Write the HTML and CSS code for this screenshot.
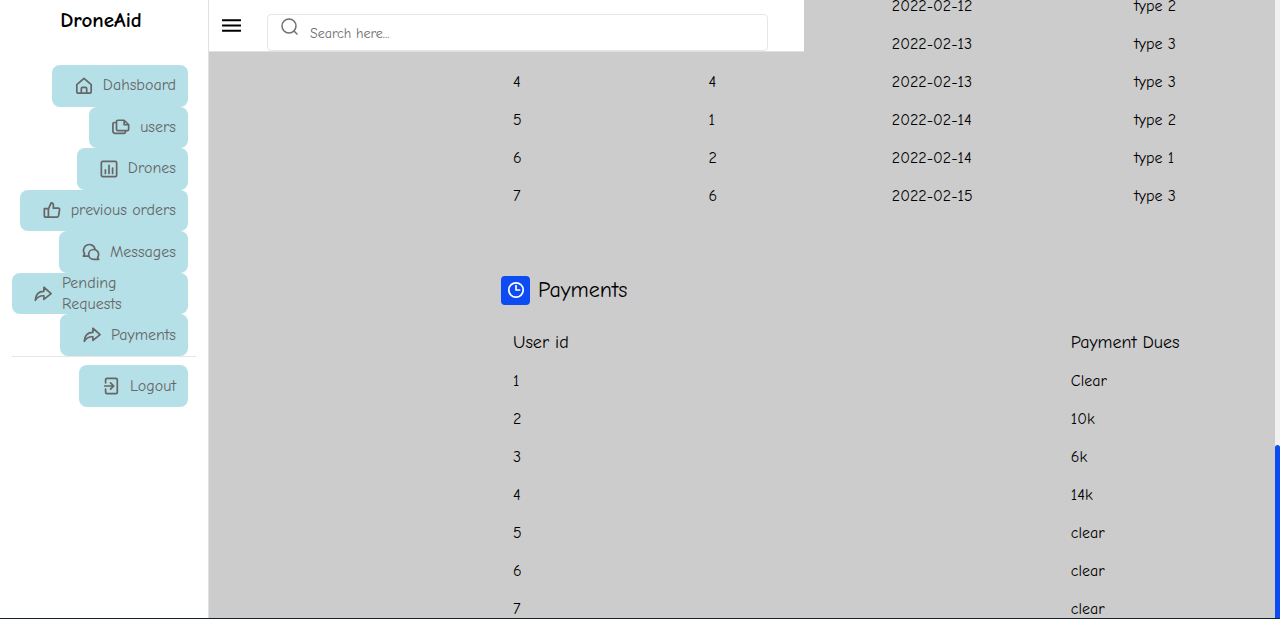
FILE: index.html
```html
<!DOCTYPE html>
<html lang="en">
<head>
<meta charset="utf-8">
<title>DroneAid</title>
<link rel="stylesheet" href="styles.css">
</head>
<body>
<div class="app">
  <aside class="sidebar">
    <h1 class="brand">DroneAid</h1>
    <nav class="menu">
      <a class="item" href="#"><svg class="icon" viewBox="0 0 20 20"><path d="M2 8.500 10 1.500l8 7V16.500q0 1.500-1.500 1.500h-13Q2 18 2 16.500zM7 18v-5q0-1.500 1.500-1.500h3q1.500 0 1.500 1.500V18"/></svg><span>Dahsboard</span></a>
      <a class="item" href="#"><svg class="icon" viewBox="0 0 20 20"><path d="M6.500 2.500H13.500l5 5v5q0 1.500-1.500 1.500h-10.500Q5 14 5 12.500V4q0-1.500 1.500-1.500zM13.500 2.500v5h5M5 5H3Q1 5 1 7v7.500q0 2.500 2.500 2.500h9.500q2 0 2-2v-1"/></svg><span>users</span></a>
      <a class="item" href="#"><svg class="icon" viewBox="0 0 20 20"><rect x="1.500" y="1.500" width="17" height="17" rx="1.500"/><path d="M6 11v4M10 6v9M14 9v6"/></svg><span>Drones</span></a>
      <a class="item" href="#"><svg class="icon" viewBox="0 0 20 20"><path d="M1.500 8.500h4.500v9.500H3q-1.500 0-1.500-1.500zM6 9l3-7q2.500 0 2.500 2.500v3.500H17q1.700 0 1.400 1.500L17.300 16.500Q17 18 15.500 18H6"/></svg><span>previous orders</span></a>
      <a class="item" href="#"><svg class="icon" viewBox="0 0 20 20"><path d="M7 14.500H1.500l1.400-2.500A6.500 6.500 0 1 1 14.500 6.700"/><path d="M12.900 7.200a5.500 5.500 0 1 0 0 11H18.500l-1.200-2.200A5.500 5.500 0 0 0 12.900 7.200z"/></svg><span>Messages</span></a>
      <a class="item item-wrap" href="#"><svg class="icon" viewBox="0 0 20 20"><path d="M11 2.500l8 7-8 6.500v-4q-6-.5-9.500 5Q2 7 11 7z"/></svg><span class="label-wrap">Pending Requests</span></a>
      <a class="item" href="#"><svg class="icon" viewBox="0 0 20 20"><path d="M11 2.500l8 7-8 6.500v-4q-6-.5-9.500 5Q2 7 11 7z"/></svg><span>Payments</span></a>
    </nav>
    <div class="menu-end">
      <a class="item" href="#"><svg class="icon" viewBox="0 0 20 20"><path d="M4 6.500v-3Q4 1.500 5.500 1.500h10Q17 1.500 17 3v14q0 1.500-1.500 1.500h-10Q4 18.500 4 17v-3.500M3 10H13M9.500 6.500 13 10l-3.500 3.500"/></svg><span>Logout</span></a>
    </div>
  </aside>

  <main class="main">
    <header class="topbar">
      <button class="toggle" type="button" aria-label="Toggle menu"><svg viewBox="0 0 20 14"><path d="M1 2h18M1 7h18M1 12h18"/></svg></button>
      <div class="search">
        <svg class="icon" viewBox="0 0 20 20"><circle cx="9" cy="9" r="7"/><path d="m14 14 3 3"/></svg>
        <input class="search-input" type="text" placeholder="Search here..." aria-label="Search">
      </div>
    </header>

    <div class="content">
      <table class="table orders">
        <colgroup><col class="col-id"><col class="col-user"><col class="col-date"><col></colgroup>
        <tbody>
          <tr><td></td><td></td><td>2022-02-12</td><td>type 2</td></tr>
          <tr><td></td><td></td><td>2022-02-13</td><td>type 3</td></tr>
          <tr><td>4</td><td>4</td><td>2022-02-13</td><td>type 3</td></tr>
          <tr><td>5</td><td>1</td><td>2022-02-14</td><td>type 2</td></tr>
          <tr><td>6</td><td>2</td><td>2022-02-14</td><td>type 1</td></tr>
          <tr><td>7</td><td>6</td><td>2022-02-15</td><td>type 3</td></tr>
        </tbody>
      </table>

      <h2 class="heading"><span class="badge"><svg class="icon" viewBox="0 0 20 20"><circle cx="10" cy="10" r="8"/><path d="M10 5v5h4"/></svg></span>Payments</h2>

      <table class="table">
        <colgroup><col class="col-payer"><col></colgroup>
        <thead><tr><th>User id</th><th>Payment Dues</th></tr></thead>
        <tbody>
          <tr><td>1</td><td>Clear</td></tr>
          <tr><td>2</td><td>10k</td></tr>
          <tr><td>3</td><td>6k</td></tr>
          <tr><td>4</td><td>14k</td></tr>
          <tr><td>5</td><td>clear</td></tr>
          <tr><td>6</td><td>clear</td></tr>
          <tr><td>7</td><td>clear</td></tr>
        </tbody>
      </table>
    </div>
  </main>
  <div class="scrollbar"><div class="thumb"></div></div>
</div>
</body>
</html>
```
FILE: styles.css
```css
* { box-sizing: border-box; }
body {
  margin: 0;
  font-family: "Comic Sans MS", "Comic Neue", "Open Sans", sans-serif;
  font-size: 16px;
  color: #000;
}
.app {
  display: grid;
  grid-template-columns: 209px 1fr 5px;
  height: 100vh;
  overflow: hidden;
  border-bottom: 1px solid #14222b;
}
.icon {
  flex: none;
  width: 18px;
  height: 18px;
  fill: none;
  stroke: currentColor;
  stroke-width: 1.9;
  stroke-linejoin: round;
  stroke-linecap: round;
}
.sidebar {
  padding: 0 12px;
  background: #fff;
  border-right: 1px solid #e0e0e0;
}
.brand {
  height: 65px;
  margin: 0;
  padding: 6px 6px 0 0;
  font-size: 21px;
  line-height: 28px;
  text-align: center;
}
.menu, .menu-end {
  display: grid;
  justify-items: end;
  padding-right: 8px;
}
.menu { height: 291px; grid-auto-rows: 1fr; }
.menu-end {
  padding-top: 8px;
  border-top: 1px solid #e6e6e6;
}
.item {
  display: flex;
  align-items: center;
  gap: 10px;
  min-height: 42px;
  padding: 0 12px 0 23px;
  border-radius: 8px;
  background: #b5e0e7;
  color: #666;
  line-height: 21px;
  text-decoration: none;
}
.menu .item { min-height: 0; }
.item-wrap { width: 100%; padding-left: 22px; }
.label-wrap { width: 80px; }
.main {
  position: relative;
  min-width: 0;
  min-height: 0;
  overflow: hidden;
  background: #ccc;
}
.topbar {
  position: absolute;
  top: 0;
  left: 0;
  display: flex;
  align-items: flex-end;
  gap: 25px;
  width: 55.8%;
  height: 52px;
  padding: 0 36px 0 12px;
  background: #fff;
  border-bottom: 1px solid #e0e0e0;
}
.toggle {
  align-self: center;
  padding: 0;
  border: 0;
  background: none;
}
.toggle svg {
  display: block;
  width: 21px;
  height: 15px;
  stroke: #000;
  stroke-width: 1.8;
}
.search {
  display: flex;
  flex: 1;
  height: 37px;
  padding: 2px 10px 0 12px;
  border: 1px solid #e6e6e6;
  border-radius: 4px;
  color: #707070;
}
.search .icon { width: 20px; height: 20px; stroke-width: 1.5; }
.search-input {
  flex: 1;
  height: 32px;
  padding: 0 10px;
  border: 0;
  outline: 0;
  background: none;
  font: inherit;
  font-size: 14px;
}
.search-input::placeholder { color: #6b6b6b; }
.content {
  margin-top: -13px;
  padding: 0 8% 0 292px;
}
.table {
  width: 100%;
  table-layout: fixed;
  border-collapse: collapse;
  line-height: 24px;
  text-align: left;
}
.table th, .table td {
  height: 38px;
  padding: 7px 12px;
  white-space: nowrap;
}
.table th {
  height: 39px;
  font-size: 18px;
  font-weight: 400;
}
.col-id { width: 28.4%; }
.col-user { width: 26.6%; }
.col-date { width: 35.2%; }
.col-payer { width: 81%; }
.heading {
  display: flex;
  align-items: center;
  gap: 8px;
  margin: 60px 0 18px;
  font-size: 22px;
  font-weight: 400;
  line-height: 30px;
}
.badge {
  display: grid;
  place-items: center;
  width: 29px;
  height: 29px;
  border-radius: 4px;
  background: #0d4cf2;
  color: #fff;
}
.scrollbar {
  display: flex;
  align-items: flex-end;
  background: #f1f1f1;
}
.thumb {
  width: 100%;
  height: 28%;
  border-radius: 3px 3px 0 0;
  background: #0d4cf2;
}
```
